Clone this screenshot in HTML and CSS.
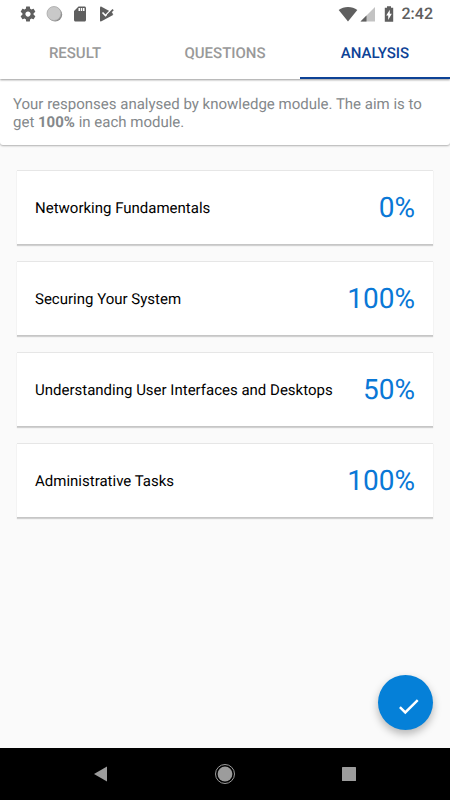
FILE: index.html
```
<!DOCTYPE html>
<html lang="en">
<head>
<meta charset="utf-8">
<meta name="viewport" content="width=device-width, initial-scale=1">
<title>Analysis</title>
<link rel="stylesheet" href="styles.css">
</head>

<body>
<header class="top">
  <div class="status">
    <div class="status-left">
      <svg width="18" height="18" viewBox="0 0 24 24"><path fill="#5f5f5f" d="M19.43 12.98c.04-.32.07-.64.07-.98s-.03-.66-.07-.98l2.11-1.65c.19-.15.24-.42.12-.64l-2-3.46c-.12-.22-.39-.3-.61-.22l-2.49 1c-.52-.4-1.08-.73-1.69-.98l-.38-2.65C14.46 2.18 14.25 2 14 2h-4c-.25 0-.46.18-.49.42l-.38 2.65c-.61.25-1.17.59-1.69.98l-2.49-1c-.23-.09-.49 0-.61.22l-2 3.46c-.13.22-.07.49.12.64l2.11 1.65c-.04.32-.07.65-.07.98s.03.66.07.98l-2.11 1.65c-.19.15-.24.42-.12.64l2 3.46c.12.22.39.3.61.22l2.49-1c.52.4 1.08.73 1.69.98l.38 2.65c.03.24.24.42.49.42h4c.25 0 .46-.18.49-.42l.38-2.65c.61-.25 1.17-.59 1.69-.98l2.49 1c.23.09.49 0 .61-.22l2-3.46c.12-.22.07-.49-.12-.64l-2.11-1.65zM12 15.5c-1.93 0-3.5-1.57-3.5-3.5s1.57-3.5 3.5-3.5 3.5 1.57 3.5 3.5-1.57 3.5-3.5 3.5z"/></svg>
      <svg width="18" height="18" viewBox="0 0 18 18"><circle cx="10.200" cy="9.600" r="7" fill="#8c8c8c"/><circle cx="9" cy="8.500" r="7" fill="#c9c9c9" stroke="#a8a8a8" stroke-width=".8"/></svg>
      <svg width="18" height="18" viewBox="0 0 24 24"><path fill="#5f5f5f" d="M18 2h-8L4 8v12c0 1.100.9 2 2 2h12c1.100 0 2-.9 2-2V4c0-1.100-.9-2-2-2zm-6 6h-2V4h2v4zm3 0h-2V4h2v4zm3 0h-2V4h2v4z"/></svg>
      <svg width="18" height="18" viewBox="0 0 18 18"><path fill="#5f5f5f" d="M3 2.600v12.800c0 .9.700 1.300 1.500.9L16.500 9.800V8.200L4.500 1.700C3.700 1.300 3 1.700 3 2.600z"/><path fill="#fff" d="M14 1l4 3v5l-2 1z"/><path fill="none" stroke="#fff" stroke-width="1.600" d="M5.500 7.500l3 3L15.500 3.500"/><path fill="none" stroke="#5f5f5f" stroke-width="1.800" d="M10.500 10.300l5.600-5.600"/></svg>
    </div>
    <div class="status-right">
      <svg width="20" height="18" viewBox="0 0 20 18"><path fill="#5f5f5f" d="M10 16.500L.7 5C3.200 3 6.500 1.900 10 1.900S16.800 3 19.300 5z"/></svg>
      <svg class="signal" width="16" height="18" viewBox="0 0 16 18"><path fill="#c3c3c3" d="M15 2v14.500H.5z"/><path fill="#5f5f5f" d="M6.500 10.500v6h-6z"/></svg>
      <svg class="battery" width="10" height="18" viewBox="0 0 10 18"><path fill="#5f5f5f" d="M3 1.200h4v1.600h2.200v14H.8v-14H3z"/><path fill="#fff" d="M5.800 4.800v4h2L4.200 15v-4.500h-2z"/></svg>
      <time class="clock">2:42</time>
    </div>
  </div>
  <nav class="tabs">
    <a class="tab" href="#result">RESULT</a>
    <a class="tab" href="#questions">QUESTIONS</a>
    <a class="tab active" href="#analysis" aria-current="page">ANALYSIS</a>
  </nav>
</header>

<p class="intro">Your responses analysed by knowledge module. The aim is to get <strong>100%</strong> in each module.</p>

<main class="content">
  <ul class="modules">
    <li class="module"><span>Networking Fundamentals</span><span class="score">0%</span></li>
    <li class="module"><span>Securing Your System</span><span class="score">100%</span></li>
    <li class="module"><span>Understanding User Interfaces and Desktops</span><span class="score">50%</span></li>
    <li class="module"><span>Administrative Tasks</span><span class="score">100%</span></li>
  </ul>
  <button class="fab" type="button" aria-label="Done">
    <svg width="55" height="55" viewBox="0 0 54 54"><path fill="none" stroke="#fff" stroke-width="2.400" d="M21.500 31.500l5.300 5.300L39 24.700"/></svg>
  </button>
</main>

<footer class="navbar">
  <button type="button" aria-label="Back"><svg width="22" height="22" viewBox="0 0 22 22"><path fill="#9c9c9c" d="M17 3.500v15L4 11z"/></svg></button>
  <button type="button" aria-label="Home"><svg width="22" height="22" viewBox="0 0 22 22"><circle cx="11" cy="11" r="9.500" fill="none" stroke="#9c9c9c"/><circle cx="11" cy="11" r="7.400" fill="#9c9c9c"/></svg></button>
  <button type="button" aria-label="Recent apps"><svg width="22" height="22" viewBox="0 0 22 22"><rect x="4" y="4" width="14" height="14" rx=".5" fill="#9c9c9c"/></svg></button>
</footer>
</body>
</html>
```
FILE: styles.css
```
* {
  box-sizing: border-box;
}

body {
  margin: 0;
  min-height: 100vh;
  display: flex;
  flex-direction: column;
  background: #fafafa;
  color: #000;
  font-family: Roboto, sans-serif;
  font-size: 15px;
  text-rendering: geometricPrecision;
}

svg {
  display: block;
}

.top {
  z-index: 1;
  background: #fff;
  box-shadow: 0 1px 2px rgba(0, 0, 0, 0.4);
}

.status {
  display: flex;
  justify-content: space-between;
  align-items: center;
  height: 27px;
  padding: 0 17px 0 19px;
}

.status-left,
.status-right {
  display: flex;
  align-items: center;
}

.status-left {
  gap: 8px;
}

.signal {
  margin-left: 2px;
}

.battery {
  margin: 0 8px;
}

.clock {
  color: #5f5f5f;
  font-size: 16px;
  font-weight: 500;
}

.tabs {
  display: grid;
  grid-template-columns: repeat(3, 1fr);
}

.tab {
  height: 52px;
  border-bottom: 2px solid transparent;
  color: #999;
  font-weight: 500;
  line-height: 52px;
  text-align: center;
  text-decoration: none;
}

.tab.active {
  border-color: #0d4296;
  color: #0d4296;
}

.intro {
  margin: 0;
  padding: 16px 13px 14px;
  border-radius: 0 0 3px 3px;
  background: #fff;
  box-shadow: 0 1px 2px rgba(0, 0, 0, 0.3);
  color: #84888b;
  line-height: 18px;
}

.content {
  flex: 1;
  display: flex;
  flex-direction: column;
  justify-content: space-between;
  padding: 25px 17px 18px;
}

.modules {
  display: flex;
  flex-direction: column;
  gap: 16px;
  margin: 0;
  padding: 0;
  list-style: none;
}

.module {
  display: flex;
  justify-content: space-between;
  align-items: center;
  gap: 16px;
  min-height: 75px;
  padding: 0 18px;
  border-top: 1px solid #e6e6e6;
  border-bottom: 1px solid #c6c6c6;
  background: #fff;
  box-shadow: 0 1px 1px rgba(0, 0, 0, 0.16);
}

.score {
  color: #0a78d6;
  font-size: 28px;
}

.fab {
  align-self: flex-end;
  width: 55px;
  height: 55px;
  padding: 0;
  border: 0;
  border-radius: 50%;
  background: #0580d8;
  box-shadow: 0 4px 8px rgba(0, 0, 0, 0.28);
}

.navbar {
  display: flex;
  justify-content: center;
  gap: 102px;
  padding: 15px 0;
  background: #000;
}

.navbar button {
  padding: 0;
  border: 0;
  background: none;
}
```
